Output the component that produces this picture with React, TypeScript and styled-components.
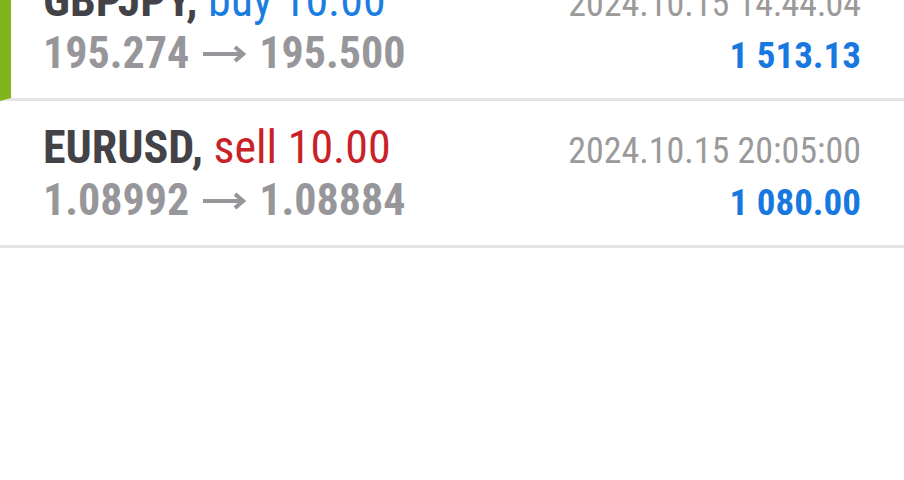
import React from "react";
import styled, { createGlobalStyle } from "styled-components";

interface Trade {
  symbol: string;
  side: "buy" | "sell";
  volume: string;
  openPrice: string;
  closePrice: string;
  time: string;
  profit: string;
  active?: boolean;
}

const trades: Trade[] = [
  {
    symbol: "GBPJPY",
    side: "buy",
    volume: "10.00",
    openPrice: "195.274",
    closePrice: "195.500",
    time: "2024.10.15 14:44:04",
    profit: "1 513.13",
    active: true,
  },
  {
    symbol: "EURUSD",
    side: "sell",
    volume: "10.00",
    openPrice: "1.08992",
    closePrice: "1.08884",
    time: "2024.10.15 20:05:00",
    profit: "1 080.00",
  },
];

const GlobalStyle = createGlobalStyle`
  html, body {
    margin: 0;
    padding: 0;
    background: #ffffff;
  }
  body {
    font-family: "Roboto Condensed", Roboto, "Liberation Sans", sans-serif;
    font-stretch: 85%;
  }
`;

const Screen = styled.div`
  width: 904px;
  height: 480px;
  overflow: hidden;
  background: #ffffff;
`;

// list is scrolled so the first row is partly hidden
const List = styled.div`
  margin-top: -46px;
  display: flex;
  flex-direction: column;
`;

const Row = styled.div<{ $active?: boolean }>`
  display: grid;
  grid-template-columns: 1fr auto;
  grid-template-rows: 52px 52px;
  align-items: baseline;
  padding: 20px 43px 20px ${(p) => (p.$active ? 32 : 43)}px;
  border-left: ${(p) => (p.$active ? "11px solid #80b51b" : "none")};
  border-bottom: 3px solid #e4e4e4;
`;

const Title = styled.div`
  font-size: 46px;
  line-height: 52px;
  white-space: nowrap;
`;

const Symbol = styled.span`
  font-weight: 700;
  color: #424247;
`;

const Side = styled.span<{ $side: "buy" | "sell" }>`
  font-weight: 400;
  color: ${(p) => (p.$side === "buy" ? "#1a7ddf" : "#c92128")};
`;

const Prices = styled.div`
  display: flex;
  align-items: center;
  gap: 13px;
  height: 52px;
  margin-top: 1px;
  font-size: 44px;
  line-height: 52px;
  font-weight: 700;
  color: #97979b;
  white-space: nowrap;
`;

const ArrowIcon = styled.svg`
  width: 44px;
  height: 18px;
  flex: none;
  margin-top: 1px;
`;

const Time = styled.div`
  font-size: 36px;
  line-height: 52px;
  color: #9a9a9a;
  text-align: right;
  white-space: nowrap;
`;

const Profit = styled.div`
  font-size: 37px;
  line-height: 52px;
  font-weight: 700;
  color: #1779df;
  text-align: right;
  white-space: nowrap;
`;

const Arrow = () => (
  <ArrowIcon viewBox="0 0 44 18">
    <path
      d="M1 9H41M33 2L41 9L33 16"
      fill="none"
      stroke="#97979b"
      strokeWidth="4.2"
      strokeLinecap="butt"
      strokeLinejoin="miter"
    />
  </ArrowIcon>
);

export default function App() {
  return (
    <Screen>
      <GlobalStyle />
      <List>
        {trades.map((t) => (
          <Row key={t.symbol} $active={t.active}>
            <Title>
              <Symbol>{t.symbol},</Symbol>{" "}
              <Side $side={t.side}>
                {t.side} {t.volume}
              </Side>
            </Title>
            <Time>{t.time}</Time>
            <Prices>
              <span>{t.openPrice}</span>
              <Arrow />
              <span>{t.closePrice}</span>
            </Prices>
            <Profit>{t.profit}</Profit>
          </Row>
        ))}
      </List>
    </Screen>
  );
}
